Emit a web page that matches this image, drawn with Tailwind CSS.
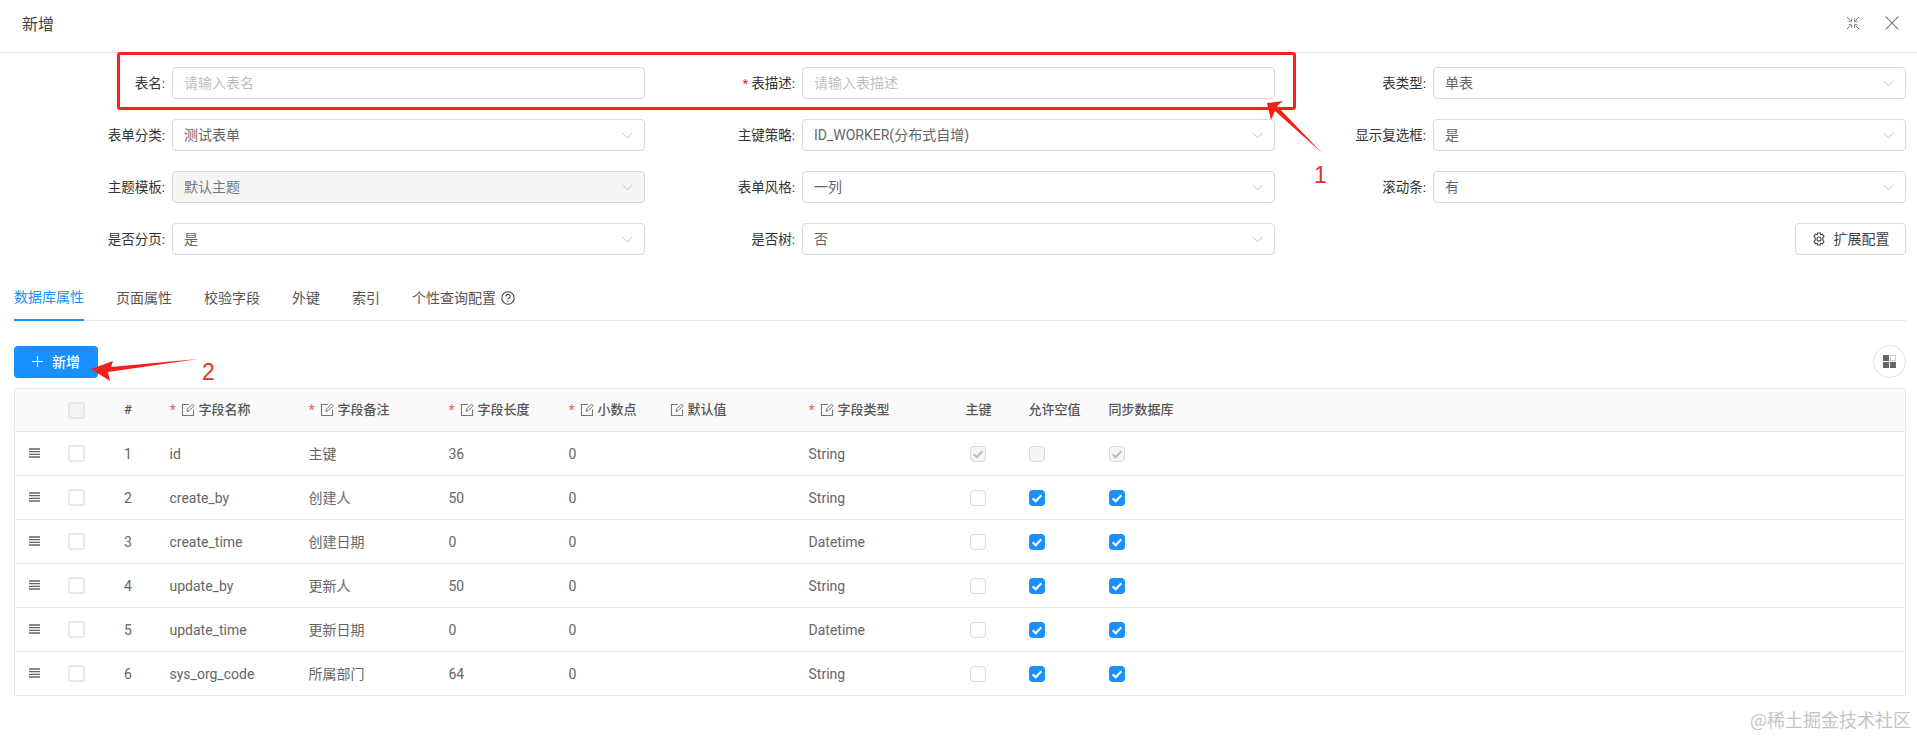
<!DOCTYPE html>
<html lang="zh-CN">
  <head>
    <meta charset="UTF-8" />
    <title>新增</title>
    <script src="https://cdn.jsdelivr.net/npm/@tailwindcss/browser@4"></script>
  </head>
  <body class="bg-white">
    <!-- shared icons -->
    <svg class="hidden">
      <symbol id="chevron" viewBox="0 0 12 12"><path d="M.8 3.2 6 8.6l5.2-5.4" fill="none" stroke="currentColor" stroke-width="1"/></symbol>
      <symbol id="edit" viewBox="0 0 14 14"><path d="M8 1.500H1.500v11h11V6.500" fill="none" stroke="currentColor" stroke-width="1.100"/><path d="M6 8.500 6.500 6l5-5 1.700 1.700-5 5z" fill="none" stroke="currentColor" stroke-width="1"/></symbol>
      <symbol id="drag" viewBox="0 0 11 10"><path d="M0 1h11M0 3.700h11M0 6.300h11M0 9h11" stroke="currentColor" stroke-width="1.300"/></symbol>
      <symbol id="check" viewBox="0 0 16 16"><path d="m3.600 8.200 3.100 3 5.600-6" fill="none" stroke="currentColor" stroke-width="2"/></symbol>
    </svg>

    <div class="relative h-[736px] w-[1917px] overflow-hidden font-['Roboto','Noto_Sans_CJK_SC',sans-serif] text-sm text-[#666]">
      <!-- modal header -->
      <div class="flex h-[53px] items-center justify-between border-b border-[#e8e8e8] pr-[18px] pl-[22px]">
        <span class="pb-[3px] text-base text-[#444]">新增</span>
        <div class="flex items-center gap-[25px] pb-[6px] text-[#777]">
          <svg class="size-[14px]" viewBox="0 0 14 14" fill="none" stroke="currentColor" stroke-width="1"><path d="M1 1l3.500 3.500M9.500 4.500 13 1M1 13l3.500-3.500M9.500 9.500 13 13"/><path d="M2.500 5.300h3v-3M11.500 5.300h-3v-3M2.500 8.700h3v3M11.500 8.700h-3v3" stroke-width=".9"/></svg>
          <svg class="size-[14px]" viewBox="0 0 14 14" fill="none" stroke="currentColor" stroke-width="1.100"><path d="m.7.7 12.600 12.600M13.300.7.7 13.300"/></svg>
        </div>
      </div>

      <!-- form -->
      <div class="grid grid-cols-[633px_630px_631px] gap-y-5 pt-[14px] pl-3">
        <div class="flex items-center">
          <label class="flex-1 pt-px pr-[7px] text-right text-[13.500px] text-[#333]">表名:</label>
          <div class="flex h-8 w-[473px] items-center rounded-sm border border-[#d9d9d9] px-[11px] text-[#bfbfbf]">请输入表名</div>
        </div>
        <div class="flex items-center">
          <label class="flex-1 pt-px pr-[7px] text-right text-[13.500px] text-[#333]"><span class="mr-[3px] text-[#f5222d]">*</span>表描述:</label>
          <div class="flex h-8 w-[473px] items-center rounded-sm border border-[#d9d9d9] px-[11px] text-[#bfbfbf]">请输入表描述</div>
        </div>
        <div class="flex items-center">
          <label class="flex-1 pt-px pr-[7px] text-right text-[13.500px] text-[#333]">表类型:</label>
          <div class="flex h-8 w-[473px] items-center justify-between rounded-sm border border-[#d9d9d9] px-[11px] text-[#666]">单表<svg class="size-[11px] text-[#bfbfbf]"><use href="#chevron"/></svg></div>
        </div>

        <div class="flex items-center">
          <label class="flex-1 pt-px pr-[7px] text-right text-[13.500px] text-[#333]">表单分类:</label>
          <div class="flex h-8 w-[473px] items-center justify-between rounded-sm border border-[#d9d9d9] px-[11px] text-[#666]">测试表单<svg class="size-[11px] text-[#bfbfbf]"><use href="#chevron"/></svg></div>
        </div>
        <div class="flex items-center">
          <label class="flex-1 pt-px pr-[7px] text-right text-[13.500px] text-[#333]">主键策略:</label>
          <div class="flex h-8 w-[473px] items-center justify-between rounded-sm border border-[#d9d9d9] px-[11px] text-[#666]">ID_WORKER(分布式自增)<svg class="size-[11px] text-[#bfbfbf]"><use href="#chevron"/></svg></div>
        </div>
        <div class="flex items-center">
          <label class="flex-1 pt-px pr-[7px] text-right text-[13.500px] text-[#333]">显示复选框:</label>
          <div class="flex h-8 w-[473px] items-center justify-between rounded-sm border border-[#d9d9d9] px-[11px] text-[#666]">是<svg class="size-[11px] text-[#bfbfbf]"><use href="#chevron"/></svg></div>
        </div>

        <div class="flex items-center">
          <label class="flex-1 pt-px pr-[7px] text-right text-[13.500px] text-[#333]">主题模板:</label>
          <div class="flex h-8 w-[473px] items-center justify-between rounded-sm border border-[#d9d9d9] bg-[#f5f5f5] px-[11px] text-[#777]">默认主题<svg class="size-[11px] text-[#bfbfbf]"><use href="#chevron"/></svg></div>
        </div>
        <div class="flex items-center">
          <label class="flex-1 pt-px pr-[7px] text-right text-[13.500px] text-[#333]">表单风格:</label>
          <div class="flex h-8 w-[473px] items-center justify-between rounded-sm border border-[#d9d9d9] px-[11px] text-[#666]">一列<svg class="size-[11px] text-[#bfbfbf]"><use href="#chevron"/></svg></div>
        </div>
        <div class="flex items-center">
          <label class="flex-1 pt-px pr-[7px] text-right text-[13.500px] text-[#333]">滚动条:</label>
          <div class="flex h-8 w-[473px] items-center justify-between rounded-sm border border-[#d9d9d9] px-[11px] text-[#666]">有<svg class="size-[11px] text-[#bfbfbf]"><use href="#chevron"/></svg></div>
        </div>

        <div class="flex items-center">
          <label class="flex-1 pt-px pr-[7px] text-right text-[13.500px] text-[#333]">是否分页:</label>
          <div class="flex h-8 w-[473px] items-center justify-between rounded-sm border border-[#d9d9d9] px-[11px] text-[#666]">是<svg class="size-[11px] text-[#bfbfbf]"><use href="#chevron"/></svg></div>
        </div>
        <div class="flex items-center">
          <label class="flex-1 pt-px pr-[7px] text-right text-[13.500px] text-[#333]">是否树:</label>
          <div class="flex h-8 w-[473px] items-center justify-between rounded-sm border border-[#d9d9d9] px-[11px] text-[#666]">否<svg class="size-[11px] text-[#bfbfbf]"><use href="#chevron"/></svg></div>
        </div>
        <div class="flex items-center justify-end">
          <button class="flex h-8 w-[111px] items-center justify-center gap-[8px] rounded-sm border border-[#d9d9d9] text-[#444]">
            <svg class="size-[14px]" viewBox="0 0 14 14" fill="none" stroke="currentColor" stroke-width="1.100"><path d="M5.600 1h2.800l.4 1.700 1.600-.6L12 4.400l-1.200 1.300.1 2.600 1.100 1.300-1.600 2.300-1.600-.6L8.400 13H5.600l-.4-1.700-1.600.6L2 9.600l1.200-1.300-.1-2.600L2 4.400l1.600-2.300 1.600.6z"/><circle cx="7" cy="7" r="2"/></svg>
            扩展配置
          </button>
        </div>
      </div>

      <!-- tabs -->
      <div class="mt-5 mr-[11px] ml-[14px] flex h-[46px] gap-8 border-b border-[#e8e8e8] text-[#555]">
        <div class="-mb-px flex h-[46px] items-center border-b-2 border-[#1890ff] text-[#1890ff]">数据库属性</div>
        <div class="flex items-center">页面属性</div>
        <div class="flex items-center">校验字段</div>
        <div class="flex items-center">外键</div>
        <div class="flex items-center">索引</div>
        <div class="flex items-center gap-[5px]">
          个性查询配置
          <svg class="size-[14px] text-[#444]" viewBox="0 0 14 14" fill="none" stroke="currentColor" stroke-width="1.100"><circle cx="7" cy="7" r="6.200"/><path d="M4.900 5.500c0-2.800 4.300-2.800 4.300-.1 0 1.600-2.200 1.500-2.200 3.200"/><path d="M7 9.800v1.200"/></svg>
        </div>
      </div>

      <!-- toolbar -->
      <div class="mt-6 mr-[11px] ml-[14px] flex items-center justify-between">
        <button class="flex h-8 w-[84px] items-center justify-center gap-[9px] rounded-sm bg-[#1890ff] text-sm font-medium text-white">
          <svg class="size-[11px]" viewBox="0 0 12 12" stroke="currentColor" stroke-width="1.100"><path d="M6 0v12M0 6h12"/></svg>
          新增
        </button>
        <div class="flex size-[33px] items-center justify-center rounded-full border border-[#e0e0e0]">
          <svg class="size-[13px]" viewBox="0 0 13 13"><path d="M0 0h6v6H0zM0 7h6v6H0zM7 7h6v6H7z" fill="#666"/><path d="M7.500.5h5v5h-5z" fill="none" stroke="#999" stroke-dasharray="1 1"/></svg>
        </div>
      </div>

      <!-- table -->
      <div class="mt-[10px] mr-[11px] ml-[14px]">
        <table class="w-[1892px] table-fixed border-collapse border border-[#e8e8e8]">
          <colgroup>
            <col class="w-[40px]" /><col class="w-[44px]" /><col class="w-[59px]" /><col class="w-[139px]" /><col class="w-[140px]" /><col class="w-[120px]" /><col class="w-[101px]" /><col class="w-[139px]" /><col class="w-[157px]" /><col class="w-[63px]" /><col class="w-[80px]" /><col />
          </colgroup>
          <thead class="bg-[#fafafa] text-left text-[13px] font-medium text-[#555]">
            <tr class="h-[43px] border-b border-[#e8e8e8]">
              <th></th>
              <th class="font-medium"><div class="ml-[13px] size-[17px] rounded-[3px] border-2 border-[#e8e8e8] bg-[#f5f5f5]"></div></th>
              <th class="text-center font-medium">#</th>
              <th class="pl-3 font-medium"><div class="flex items-center"><span class="w-[11px] text-sm text-[#f5222d]/70">*</span><svg class="mr-1 size-[14px] text-[#777]"><use href="#edit"/></svg>字段名称</div></th>
              <th class="pl-3 font-medium"><div class="flex items-center"><span class="w-[11px] text-sm text-[#f5222d]/70">*</span><svg class="mr-1 size-[14px] text-[#777]"><use href="#edit"/></svg>字段备注</div></th>
              <th class="pl-3 font-medium"><div class="flex items-center"><span class="w-[11px] text-sm text-[#f5222d]/70">*</span><svg class="mr-1 size-[14px] text-[#777]"><use href="#edit"/></svg>字段长度</div></th>
              <th class="pl-3 font-medium"><div class="flex items-center"><span class="w-[11px] text-sm text-[#f5222d]/70">*</span><svg class="mr-1 size-[14px] text-[#777]"><use href="#edit"/></svg>小数点</div></th>
              <th class="pl-3 font-medium"><div class="flex items-center"><svg class="mr-1 size-[14px] text-[#777]"><use href="#edit"/></svg>默认值</div></th>
              <th class="pl-3 font-medium"><div class="flex items-center"><span class="w-[11px] text-sm text-[#f5222d]/70">*</span><svg class="mr-1 size-[14px] text-[#777]"><use href="#edit"/></svg>字段类型</div></th>
              <th class="pl-3 font-medium">主键</th>
              <th class="pl-3 font-medium">允许空值</th>
              <th class="pl-3 font-medium">同步数据库</th>
            </tr>
          </thead>
          <tbody>
            <tr class="h-[44px] border-b border-[#e8e8e8]">
              <td><svg class="-mt-[2px] ml-[14px] h-[10px] w-[11px] text-[#666]"><use href="#drag"/></svg></td>
              <td><div class="ml-[13px] size-[17px] rounded-[3px] border-2 border-[#e8e8e8]"></div></td>
              <td class="text-center">1</td><td class="pl-3">id</td><td class="pl-3">主键</td><td class="pl-3">36</td><td class="pl-3">0</td><td></td><td class="pl-3">String</td>
              <td class="pl-4"><div class="flex size-4 items-center justify-center rounded-sm border border-[#d9d9d9] bg-[#f5f5f5] text-[#bfbfbf]"><svg class="size-4 shrink-0"><use href="#check"/></svg></div></td>
              <td class="pl-3"><div class="size-4 rounded-sm border border-[#d9d9d9] bg-[#f5f5f5]"></div></td>
              <td class="pl-3"><div class="flex size-4 items-center justify-center rounded-sm border border-[#d9d9d9] bg-[#f5f5f5] text-[#bfbfbf]"><svg class="size-4 shrink-0"><use href="#check"/></svg></div></td>
            </tr>
            <tr class="h-[44px] border-b border-[#e8e8e8]">
              <td><svg class="-mt-[2px] ml-[14px] h-[10px] w-[11px] text-[#666]"><use href="#drag"/></svg></td>
              <td><div class="ml-[13px] size-[17px] rounded-[3px] border-2 border-[#e8e8e8]"></div></td>
              <td class="text-center">2</td><td class="pl-3">create_by</td><td class="pl-3">创建人</td><td class="pl-3">50</td><td class="pl-3">0</td><td></td><td class="pl-3">String</td>
              <td class="pl-4"><div class="size-4 rounded-sm border border-[#d9d9d9]"></div></td>
              <td class="pl-3"><div class="size-4 rounded-sm bg-[#1890ff] text-white"><svg class="size-4"><use href="#check"/></svg></div></td>
              <td class="pl-3"><div class="size-4 rounded-sm bg-[#1890ff] text-white"><svg class="size-4"><use href="#check"/></svg></div></td>
            </tr>
            <tr class="h-[44px] border-b border-[#e8e8e8]">
              <td><svg class="-mt-[2px] ml-[14px] h-[10px] w-[11px] text-[#666]"><use href="#drag"/></svg></td>
              <td><div class="ml-[13px] size-[17px] rounded-[3px] border-2 border-[#e8e8e8]"></div></td>
              <td class="text-center">3</td><td class="pl-3">create_time</td><td class="pl-3">创建日期</td><td class="pl-3">0</td><td class="pl-3">0</td><td></td><td class="pl-3">Datetime</td>
              <td class="pl-4"><div class="size-4 rounded-sm border border-[#d9d9d9]"></div></td>
              <td class="pl-3"><div class="size-4 rounded-sm bg-[#1890ff] text-white"><svg class="size-4"><use href="#check"/></svg></div></td>
              <td class="pl-3"><div class="size-4 rounded-sm bg-[#1890ff] text-white"><svg class="size-4"><use href="#check"/></svg></div></td>
            </tr>
            <tr class="h-[44px] border-b border-[#e8e8e8]">
              <td><svg class="-mt-[2px] ml-[14px] h-[10px] w-[11px] text-[#666]"><use href="#drag"/></svg></td>
              <td><div class="ml-[13px] size-[17px] rounded-[3px] border-2 border-[#e8e8e8]"></div></td>
              <td class="text-center">4</td><td class="pl-3">update_by</td><td class="pl-3">更新人</td><td class="pl-3">50</td><td class="pl-3">0</td><td></td><td class="pl-3">String</td>
              <td class="pl-4"><div class="size-4 rounded-sm border border-[#d9d9d9]"></div></td>
              <td class="pl-3"><div class="size-4 rounded-sm bg-[#1890ff] text-white"><svg class="size-4"><use href="#check"/></svg></div></td>
              <td class="pl-3"><div class="size-4 rounded-sm bg-[#1890ff] text-white"><svg class="size-4"><use href="#check"/></svg></div></td>
            </tr>
            <tr class="h-[44px] border-b border-[#e8e8e8]">
              <td><svg class="-mt-[2px] ml-[14px] h-[10px] w-[11px] text-[#666]"><use href="#drag"/></svg></td>
              <td><div class="ml-[13px] size-[17px] rounded-[3px] border-2 border-[#e8e8e8]"></div></td>
              <td class="text-center">5</td><td class="pl-3">update_time</td><td class="pl-3">更新日期</td><td class="pl-3">0</td><td class="pl-3">0</td><td></td><td class="pl-3">Datetime</td>
              <td class="pl-4"><div class="size-4 rounded-sm border border-[#d9d9d9]"></div></td>
              <td class="pl-3"><div class="size-4 rounded-sm bg-[#1890ff] text-white"><svg class="size-4"><use href="#check"/></svg></div></td>
              <td class="pl-3"><div class="size-4 rounded-sm bg-[#1890ff] text-white"><svg class="size-4"><use href="#check"/></svg></div></td>
            </tr>
            <tr class="h-[44px] border-b border-[#e8e8e8]">
              <td><svg class="-mt-[2px] ml-[14px] h-[10px] w-[11px] text-[#666]"><use href="#drag"/></svg></td>
              <td><div class="ml-[13px] size-[17px] rounded-[3px] border-2 border-[#e8e8e8]"></div></td>
              <td class="text-center">6</td><td class="pl-3">sys_org_code</td><td class="pl-3">所属部门</td><td class="pl-3">64</td><td class="pl-3">0</td><td></td><td class="pl-3">String</td>
              <td class="pl-4"><div class="size-4 rounded-sm border border-[#d9d9d9]"></div></td>
              <td class="pl-3"><div class="size-4 rounded-sm bg-[#1890ff] text-white"><svg class="size-4"><use href="#check"/></svg></div></td>
              <td class="pl-3"><div class="size-4 rounded-sm bg-[#1890ff] text-white"><svg class="size-4"><use href="#check"/></svg></div></td>
            </tr>
          </tbody>
        </table>
      </div>

      <!-- red annotations drawn over the screenshot -->
      <div class="absolute top-[52px] left-[117px] h-[58px] w-[1179px] rounded-[3px] border-[3px] border-[#f5221b]"></div>
      <svg class="absolute top-0 left-0 size-full" viewBox="0 0 1917 736">
        <path d="M1322 153 1277 106 1283 101 1267 103 1271 120 1275 111z" fill="#f2201a"/>
        <path d="M198 359 111 367 113 361 91 369 110 381 108 372z" fill="#f2201a"/>
      </svg>
      <span class="absolute top-[160px] left-[1314px] font-['Liberation_Sans'] text-[23px] leading-[30px] text-[#e0302a]">1</span>
      <span class="absolute top-[357px] left-[202px] font-['Liberation_Sans'] text-[23px] leading-[30px] text-[#e0302a]">2</span>

      <span class="absolute top-[706px] right-[6px] font-['Noto_Sans_CJK_SC',sans-serif] text-[18px] leading-[26px] text-[#c4c4c4]">@稀土掘金技术社区</span>
    </div>
  </body>
</html>
